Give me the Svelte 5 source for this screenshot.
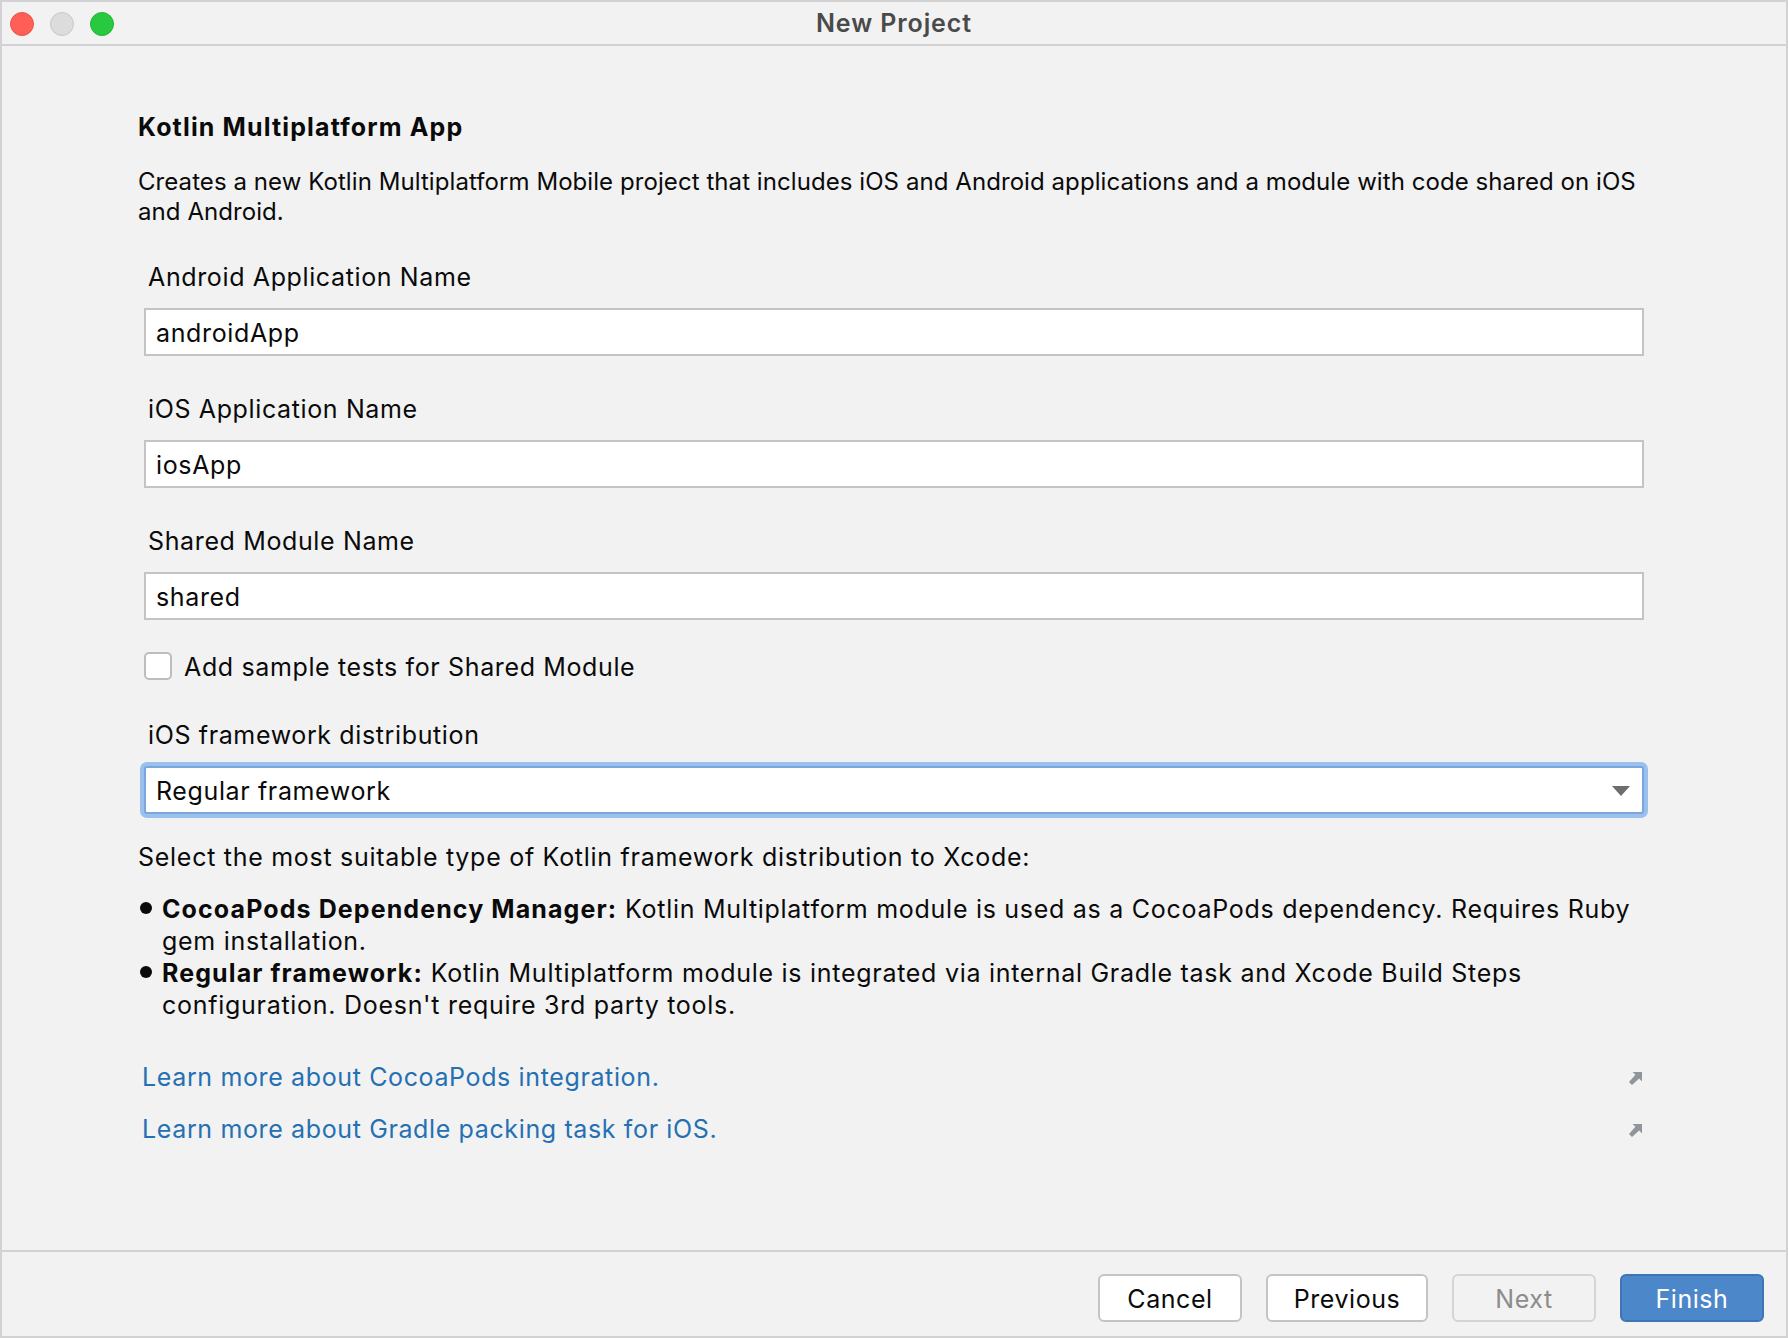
<script>
    const fields = [
        { label: "Android Application Name", value: "androidApp" },
        { label: "iOS Application Name", value: "iosApp" },
        { label: "Shared Module Name", value: "shared" }
    ];

    const links = [
        "Learn more about CocoaPods integration.",
        "Learn more about Gradle packing task for iOS."
    ];
</script>

<div class="window">
    <header class="titlebar">
        <div class="lights">
            <span class="light red"></span>
            <span class="light grey"></span>
            <span class="light green"></span>
        </div>
        <span class="title">New Project</span>
    </header>

    <main class="content">
        <h1>Kotlin Multiplatform App</h1>
        <p class="intro">Creates a new Kotlin Multiplatform Mobile project that includes iOS and Android applications and a module with code shared on iOS and Android.</p>

        {#each fields as field}
            <div class="field">
                <label for={field.value}>{field.label}</label>
                <input id={field.value} type="text" value={field.value} />
            </div>
        {/each}

        <label class="check">
            <input type="checkbox" />
            <span>Add sample tests for Shared Module</span>
        </label>

        <div class="field framework">
            <span class="label">iOS framework distribution</span>
            <div class="combo">
                <span>Regular framework</span>
                <svg width="18" height="10" viewBox="0 0 18 10"><path d="M0 0h18l-9 10z" fill="#6e6e6e" /></svg>
            </div>
        </div>

        <p class="select-hint">Select the most suitable type of Kotlin framework distribution to Xcode:</p>

        <ul>
            <li><b>CocoaPods Dependency Manager:</b> Kotlin Multiplatform module is used as a CocoaPods dependency. Requires Ruby gem installation.</li>
            <li><b>Regular framework:</b> Kotlin Multiplatform module is integrated via internal Gradle task and Xcode Build Steps configuration. Doesn't require 3rd party tools.</li>
        </ul>

        <div class="links">
            {#each links as link}
                <div class="link-row">
                    <a href="#top">{link}</a>
                    <svg class="external" width="13" height="13" viewBox="0 0 13 13"><path d="M3.6 0H13v9.4L10.2 6.6 3 13 0 10l6.4-7.2z" fill="#8f959b" /></svg>
                </div>
            {/each}
        </div>
    </main>

    <footer>
        <button type="button" class="btn">Cancel</button>
        <button type="button" class="btn wide">Previous</button>
        <button type="button" class="btn" disabled>Next</button>
        <button type="button" class="btn primary">Finish</button>
    </footer>
</div>

<style>
    :global(body) {
        margin: 0;
        background: #f2f2f2;
    }

    .window {
        box-sizing: border-box;
        width: 1788px;
        height: 1338px;
        display: flex;
        flex-direction: column;
        border: 2px solid #d2d2d2;
        background: #f2f2f2;
        color: #0a0a0a;
        font-family: Inter, "Liberation Sans", sans-serif;
        font-size: 25px;
        letter-spacing: 0.63px;
        line-height: 30px;
    }

    .titlebar {
        position: relative;
        height: 42px;
        flex: none;
        display: flex;
        align-items: center;
        justify-content: center;
        border-bottom: 2px solid #d2d2d2;
    }

    .lights {
        position: absolute;
        left: 8px;
        top: 10px;
        display: flex;
        gap: 16px;
    }

    .light {
        box-sizing: border-box;
        width: 24px;
        height: 24px;
        border-radius: 50%;
    }

    .red { background: #ff5f57; border: 1px solid #e9534c; }
    .grey { background: #dcdcdc; border: 1px solid #c8c8c8; }
    .green { background: #28c840; border: 1px solid #22b537; }

    .title {
        font-weight: 600;
        letter-spacing: 0.9px;
        color: #4a4a4a;
    }

    .content {
        flex: 1;
        padding: 66px 142px 0 136px;
    }

    h1 {
        margin: 0;
        font-size: 25px;
        letter-spacing: 1.14px;
        line-height: 30px;
        font-weight: 700;
    }

    p {
        margin: 0;
    }

    .intro {
        margin-top: 25px;
        margin-bottom: 35px;
        font-size: 24px;
        letter-spacing: 0.07px;
    }

    .field {
        margin-bottom: 38px;
        padding-left: 6px;
    }

    .field label, .label {
        display: block;
        padding-left: 4px;
        margin-bottom: 16px;
    }

    .field input {
        box-sizing: border-box;
        display: block;
        width: 1500px;
        height: 48px;
        padding: 1px 10px 0;
        border: 2px solid #c4c4c4;
        border-radius: 0;
        background: #fff;
        outline: none;
        font: inherit;
        letter-spacing: inherit;
        color: inherit;
    }

    .check {
        display: flex;
        align-items: center;
        gap: 12px;
        height: 28px;
        margin: -6px 0 40px 6px;
    }

    .check span {
        padding-top: 2px;
    }

    .check input {
        appearance: none;
        box-sizing: border-box;
        width: 28px;
        height: 28px;
        margin: 0;
        border: 2px solid #bdbdbd;
        border-radius: 5px;
        background: #fff;
    }

    .framework {
        margin-bottom: 28px;
    }

    .combo {
        box-sizing: border-box;
        width: 1500px;
        height: 48px;
        display: flex;
        align-items: center;
        justify-content: space-between;
        padding: 1px 12px 0 10px;
        border: 2px solid #7aa6dc;
        border-radius: 3px;
        background: #fff;
        box-shadow: 0 0 0 4px #9ac0ee;
    }

    .select-hint {
        letter-spacing: 0.72px;
    }

    ul {
        list-style: none;
        margin: 21px 0 0;
        padding: 0 0 0 24px;
        width: 1490px;
        line-height: 32px;
        letter-spacing: 0.72px;
    }

    li {
        position: relative;
    }

    li::before {
        content: "";
        position: absolute;
        left: -22px;
        top: 9px;
        width: 12px;
        height: 12px;
        border-radius: 50%;
        background: #0a0a0a;
    }

    b {
        font-weight: 700;
        letter-spacing: 1.1px;
    }

    .links {
        margin-top: 41px;
        margin-left: 4px;
        width: 1500px;
        display: flex;
        flex-direction: column;
        gap: 22px;
    }

    .link-row {
        display: flex;
        align-items: center;
        justify-content: space-between;
    }

    .external {
        margin-top: 2px;
    }

    a {
        color: #2470b3;
        text-decoration: none;
    }

    footer {
        flex: none;
        display: flex;
        justify-content: flex-end;
        gap: 24px;
        padding: 22px 22px 14px;
        border-top: 2px solid #d2d2d2;
    }

    .btn {
        box-sizing: border-box;
        width: 144px;
        height: 48px;
        padding: 2px 0 0;
        border: 2px solid #c4c4c4;
        border-radius: 6px;
        background: #fff;
        font: inherit;
        letter-spacing: 0.55px;
        color: #0a0a0a;
    }

    .wide {
        width: 162px;
    }

    .btn:disabled {
        background: #f2f2f2;
        border-color: #d4d4d4;
        color: #8c8c8c;
    }

    .primary {
        background: #4c87c9;
        border-color: #3f75b5;
        color: #fff;
    }
</style>
